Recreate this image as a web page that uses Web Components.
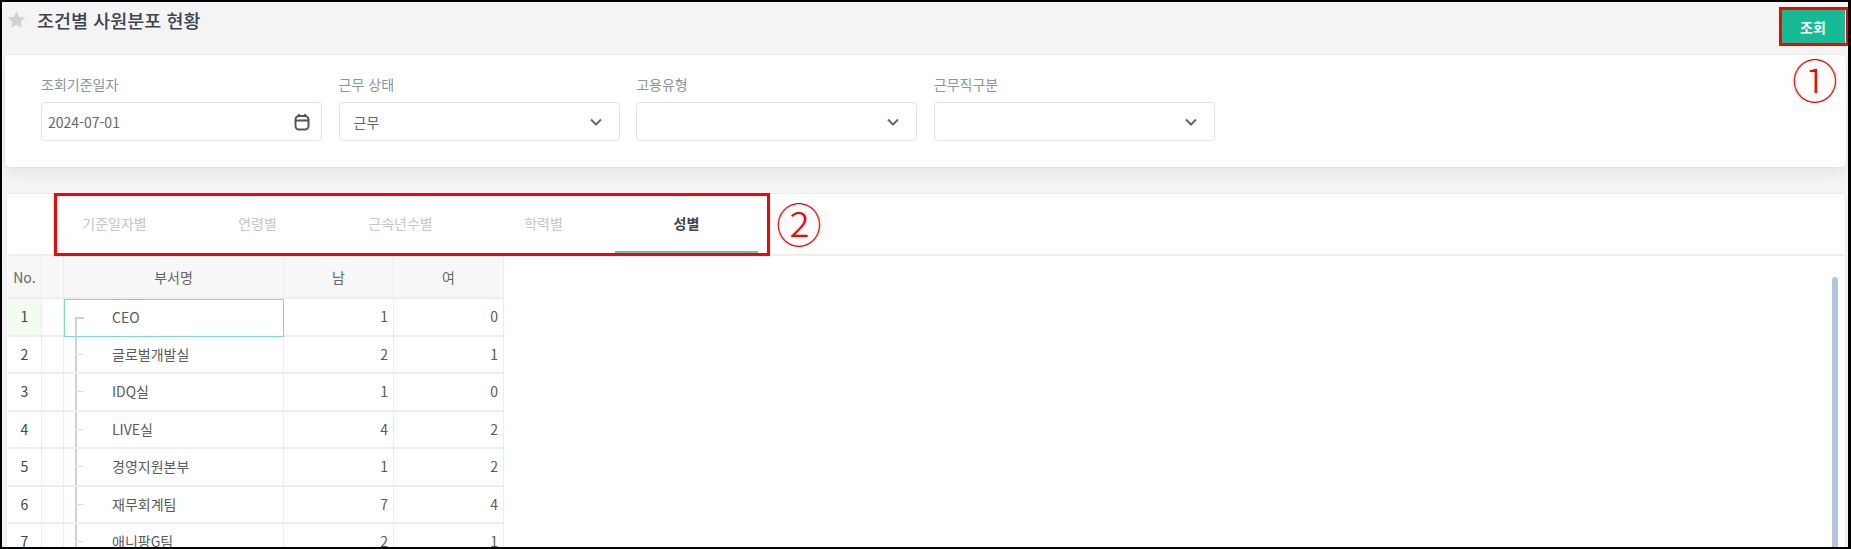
<!DOCTYPE html>
<html lang="ko">
<head>
<meta charset="utf-8">
<title>조건별 사원분포 현황</title>
<style>
  html, body { margin: 0; height: 100%; background: #f4f4f4; }
  body { font-family: "Noto Sans CJK KR", "Noto Sans", sans-serif; font-size: 14px; }
</style>
</head>
<body>
<app-page>
  <page-header slot="header" title="조건별 사원분포 현황"></page-header>
  <search-card slot="search">
    <form-field label="조회기준일자" value="2024-07-01" type="date"></form-field>
    <form-field label="근무 상태" value="근무"></form-field>
    <form-field label="고용유형"></form-field>
    <form-field label="근무직구분"></form-field>
  </search-card>
  <tab-panel slot="content">
    <tab-item>기준일자별</tab-item>
    <tab-item>연령별</tab-item>
    <tab-item>근속년수별</tab-item>
    <tab-item>학력별</tab-item>
    <tab-item active>성별</tab-item>
    <gender-grid slot="body"></gender-grid>
  </tab-panel>
  <mark-box slot="marks" style="left:1777px;top:5px;width:64px;height:33px"></mark-box>
  <mark-no slot="marks" style="left:1790px;top:54px">①</mark-no>
  <mark-box slot="marks" style="left:52px;top:191px;width:710px;height:57px"></mark-box>
  <mark-no slot="marks" style="left:774px;top:198px">②</mark-no>
</app-page>

<script>
  class AppPage extends HTMLElement {
    constructor() {
      super();
      this.attachShadow({ mode: 'open' });
      this.shadowRoot.innerHTML = `
        <style>
          :host {
            display: flex;
            flex-direction: column;
            position: relative;
            box-sizing: border-box;
            height: 549px;
            overflow: hidden;
            background: #f4f4f4;
            border: solid #000;
            border-width: 2px 3px 2px 2px;
          }
          .marks { position: absolute; inset: 0; }
        </style>
        <slot name="header"></slot>
        <slot name="search"></slot>
        <slot name="content"></slot>
        <div class="marks"><slot name="marks"></slot></div>
      `;
    }
  }

  class PageHeader extends HTMLElement {
    constructor() {
      super();
      this.attachShadow({ mode: 'open' });
      this.shadowRoot.innerHTML = `
        <style>
          :host {
            display: flex;
            align-items: flex-start;
            height: 53px;
            padding: 8px 3px 0 5px;
            box-sizing: border-box;
          }
          svg { width: 19px; height: 19px; }
          h1 {
            flex: 1;
            margin: 0 0 0 11px;
            font-size: 18.5px;
            font-weight: 500;
            line-height: 21px;
            color: #3c4350;
          }
          button {
            width: 64px;
            height: 33px;
            border: 0;
            background: #14bb94;
            color: #fff;
            font: 700 14px "Noto Sans CJK KR", sans-serif;
          }
        </style>
        <svg viewBox="0 0 24 24"><path fill="#d2d2d2" d="M12 1.500l3.300 7 7.700 1-5.600 5.300 1.400 7.600L12 18.700l-6.800 3.700 1.400-7.600L1 9.500l7.700-1z"/></svg>
        <h1></h1>
        <button>조회</button>
      `;
      this.shadowRoot.querySelector('h1').textContent = this.getAttribute('title');
    }
  }

  class SearchCard extends HTMLElement {
    constructor() {
      super();
      this.attachShadow({ mode: 'open' });
      this.shadowRoot.innerHTML = `
        <style>
          :host {
            display: grid;
            grid-template-columns: repeat(4, 281px);
            column-gap: 16.6px;
            justify-content: start;
            box-sizing: border-box;
            height: 112px;
            margin: 0 2px 26px 3px;
            padding: 18px 0 0 36px;
            background: #fff;
            border-radius: 4px;
            box-shadow: 0 0 2px rgba(0,0,0,.12), 0 8px 14px rgba(0,0,0,.05);
          }
        </style>
        <slot></slot>
      `;
    }
  }

  class FormField extends HTMLElement {
    constructor() {
      super();
      this.attachShadow({ mode: 'open' });
      const isDate = this.getAttribute('type') === 'date';
      const icon = isDate
        ? `<svg width="16" height="18" viewBox="0 0 16 18" fill="none" stroke="#555" stroke-width="2"><rect x="1.500" y="3" width="13" height="13.500" rx="3.500"/><path d="M1.500 7.500h13M5 1v3M11 1v3"/></svg>`
        : `<svg width="12" height="8" viewBox="0 0 12 8" fill="none" stroke="#666" stroke-width="2"><path d="M1 1.500l5 5 5-5"/></svg>`;
      this.shadowRoot.innerHTML = `
        <style>
          :host { display: block; }
          label {
            display: block;
            height: 29px;
            line-height: 22px;
            color: #8b94a0;
            font-size: 14px;
          }
          .box {
            display: flex;
            align-items: center;
            justify-content: space-between;
            box-sizing: border-box;
            height: 39px;
            padding: ${isDate ? '0 11px 0 6px' : '0 17px 0 14px'};
            border: 1px solid #e3e3e3;
            border-radius: 4px;
            color: #666;
            font-size: 14px;
          }
        </style>
        <label></label>
        <div class="box"><span></span>${icon}</div>
      `;
      this.shadowRoot.querySelector('label').textContent = this.getAttribute('label');
      this.shadowRoot.querySelector('span').textContent = this.getAttribute('value') || '';
    }
  }

  class TabPanel extends HTMLElement {
    constructor() {
      super();
      this.attachShadow({ mode: 'open' });
      this.shadowRoot.innerHTML = `
        <style>
          :host {
            display: flex;
            flex-direction: column;
            flex: 1;
            min-height: 0;
            margin: 0 2px 0 4px;
            background: #fff;
            border: 1px solid #ececec;
            border-bottom: 0;
            border-radius: 4px 4px 0 0;
          }
          .tabs { display: flex; height: 60px; box-sizing: border-box; padding: 0 0 1px 36px; }
          .body {
            flex: 1;
            min-height: 0;
            position: relative;
            border-top: 2px solid #eee;
            border-radius: 4px 4px 0 0;
          }
          .bar {
            position: absolute;
            left: 1825px;
            top: 21px;
            bottom: 0;
            width: 6px;
            border-radius: 3px 3px 0 0;
            background: #b5c6da;
          }
        </style>
        <div class="tabs"><slot></slot></div>
        <div class="body"><slot name="body"></slot><div class="bar"></div></div>
      `;
    }
  }

  class TabItem extends HTMLElement {
    constructor() {
      super();
      this.attachShadow({ mode: 'open' });
      this.shadowRoot.innerHTML = `
        <style>
          :host {
            display: flex;
            align-items: center;
            justify-content: center;
            box-sizing: border-box;
            width: 143px;
            padding-bottom: 2px;
            color: #c3c6ca;
            font-size: 14px;
          }
          :host([active]) {
            color: #3c4350;
            font-weight: 700;
            box-shadow: inset 0 -2px 0 #5cc9b0;
          }
        </style>
        <slot></slot>
      `;
    }
  }

  const genderRows = [
    ['CEO', 1, 0], ['글로벌개발실', 2, 1], ['IDQ실', 1, 0], ['LIVE실', 4, 2],
    ['경영지원본부', 1, 2], ['재무회계팀', 7, 4], ['애니팡G팀', 2, 1]
  ];

  class GenderGrid extends HTMLElement {
    constructor() {
      super();
      this.attachShadow({ mode: 'open' });
      const rows = genderRows.map((r, i) => `
        <div class="row${i === 0 ? ' first' : ''}">
          <div class="no">${i + 1}</div>
          <div class="gap"></div>
          <div class="name">${r[0]}</div>
          <div class="num">${r[1]}</div>
          <div class="num">${r[2]}</div>
        </div>`).join('');
      this.shadowRoot.innerHTML = `
        <style>
          :host { display: block; width: 496px; margin-left: 1px; color: #5a5a5a; font-size: 14px; }
          .row, .head {
            display: grid;
            grid-template-columns: 34px 22px 220px 110px 110px;
          }
          .head { height: 43px; background: #f8f8f8; }
          .head div {
            display: flex;
            align-items: center;
            justify-content: center;
            border-right: 1px solid #ececec;
            border-bottom: 2px solid #eee;
            color: #666;
          }
          .row { height: 37.5px; }
          .row > div {
            display: flex;
            align-items: center;
            box-sizing: border-box;
            padding-bottom: 1px;
            border-right: 1px solid #ececec;
            border-bottom: 2px solid #eee;
          }
          .no { justify-content: center; color: #444; }
          .first .no { background: #f3fcf1; }
          .row .num { justify-content: flex-end; padding-right: 5px; }
          .row .name {
            padding-left: 48px;
            background:
              linear-gradient(#dde0e4, #dde0e4) 11px 50% / 9px 1px no-repeat,
              linear-gradient(#ccd2da, #ccd2da) 11px 0 / 2px 100% no-repeat;
          }
          .row.first .name {
            background:
              linear-gradient(#ccd2da, #ccd2da) 11px 50% / 9px 2px no-repeat,
              linear-gradient(#ccd2da, #ccd2da) 11px 100% / 2px 50% no-repeat;
            box-shadow: inset 0 0 0 1px #7ddcc5;
            border: 0;
            padding-bottom: 2px;
          }
        </style>
        <div class="head">
          <div>No.</div><div></div><div>부서명</div><div>남</div><div>여</div>
        </div>
        ${rows}
      `;
    }
  }

  class MarkBox extends HTMLElement {
    constructor() {
      super();
      this.attachShadow({ mode: 'open' });
      this.shadowRoot.innerHTML = `
        <style>
          :host { display: block; position: absolute; border: 3px solid #f00; }
        </style>
      `;
    }
  }

  class MarkNo extends HTMLElement {
    constructor() {
      super();
      this.attachShadow({ mode: 'open' });
      this.shadowRoot.innerHTML = `
        <style>
          :host {
            display: block;
            position: absolute;
            width: 44px;
            text-align: center;
            color: #f00;
            font-size: 46px;
            font-weight: 300;
            line-height: 44px;
          }
        </style>
        <slot></slot>
      `;
    }
  }

  customElements.define('app-page', AppPage);
  customElements.define('page-header', PageHeader);
  customElements.define('search-card', SearchCard);
  customElements.define('form-field', FormField);
  customElements.define('tab-panel', TabPanel);
  customElements.define('tab-item', TabItem);
  customElements.define('gender-grid', GenderGrid);
  customElements.define('mark-box', MarkBox);
  customElements.define('mark-no', MarkNo);
</script>
</body>
</html>
